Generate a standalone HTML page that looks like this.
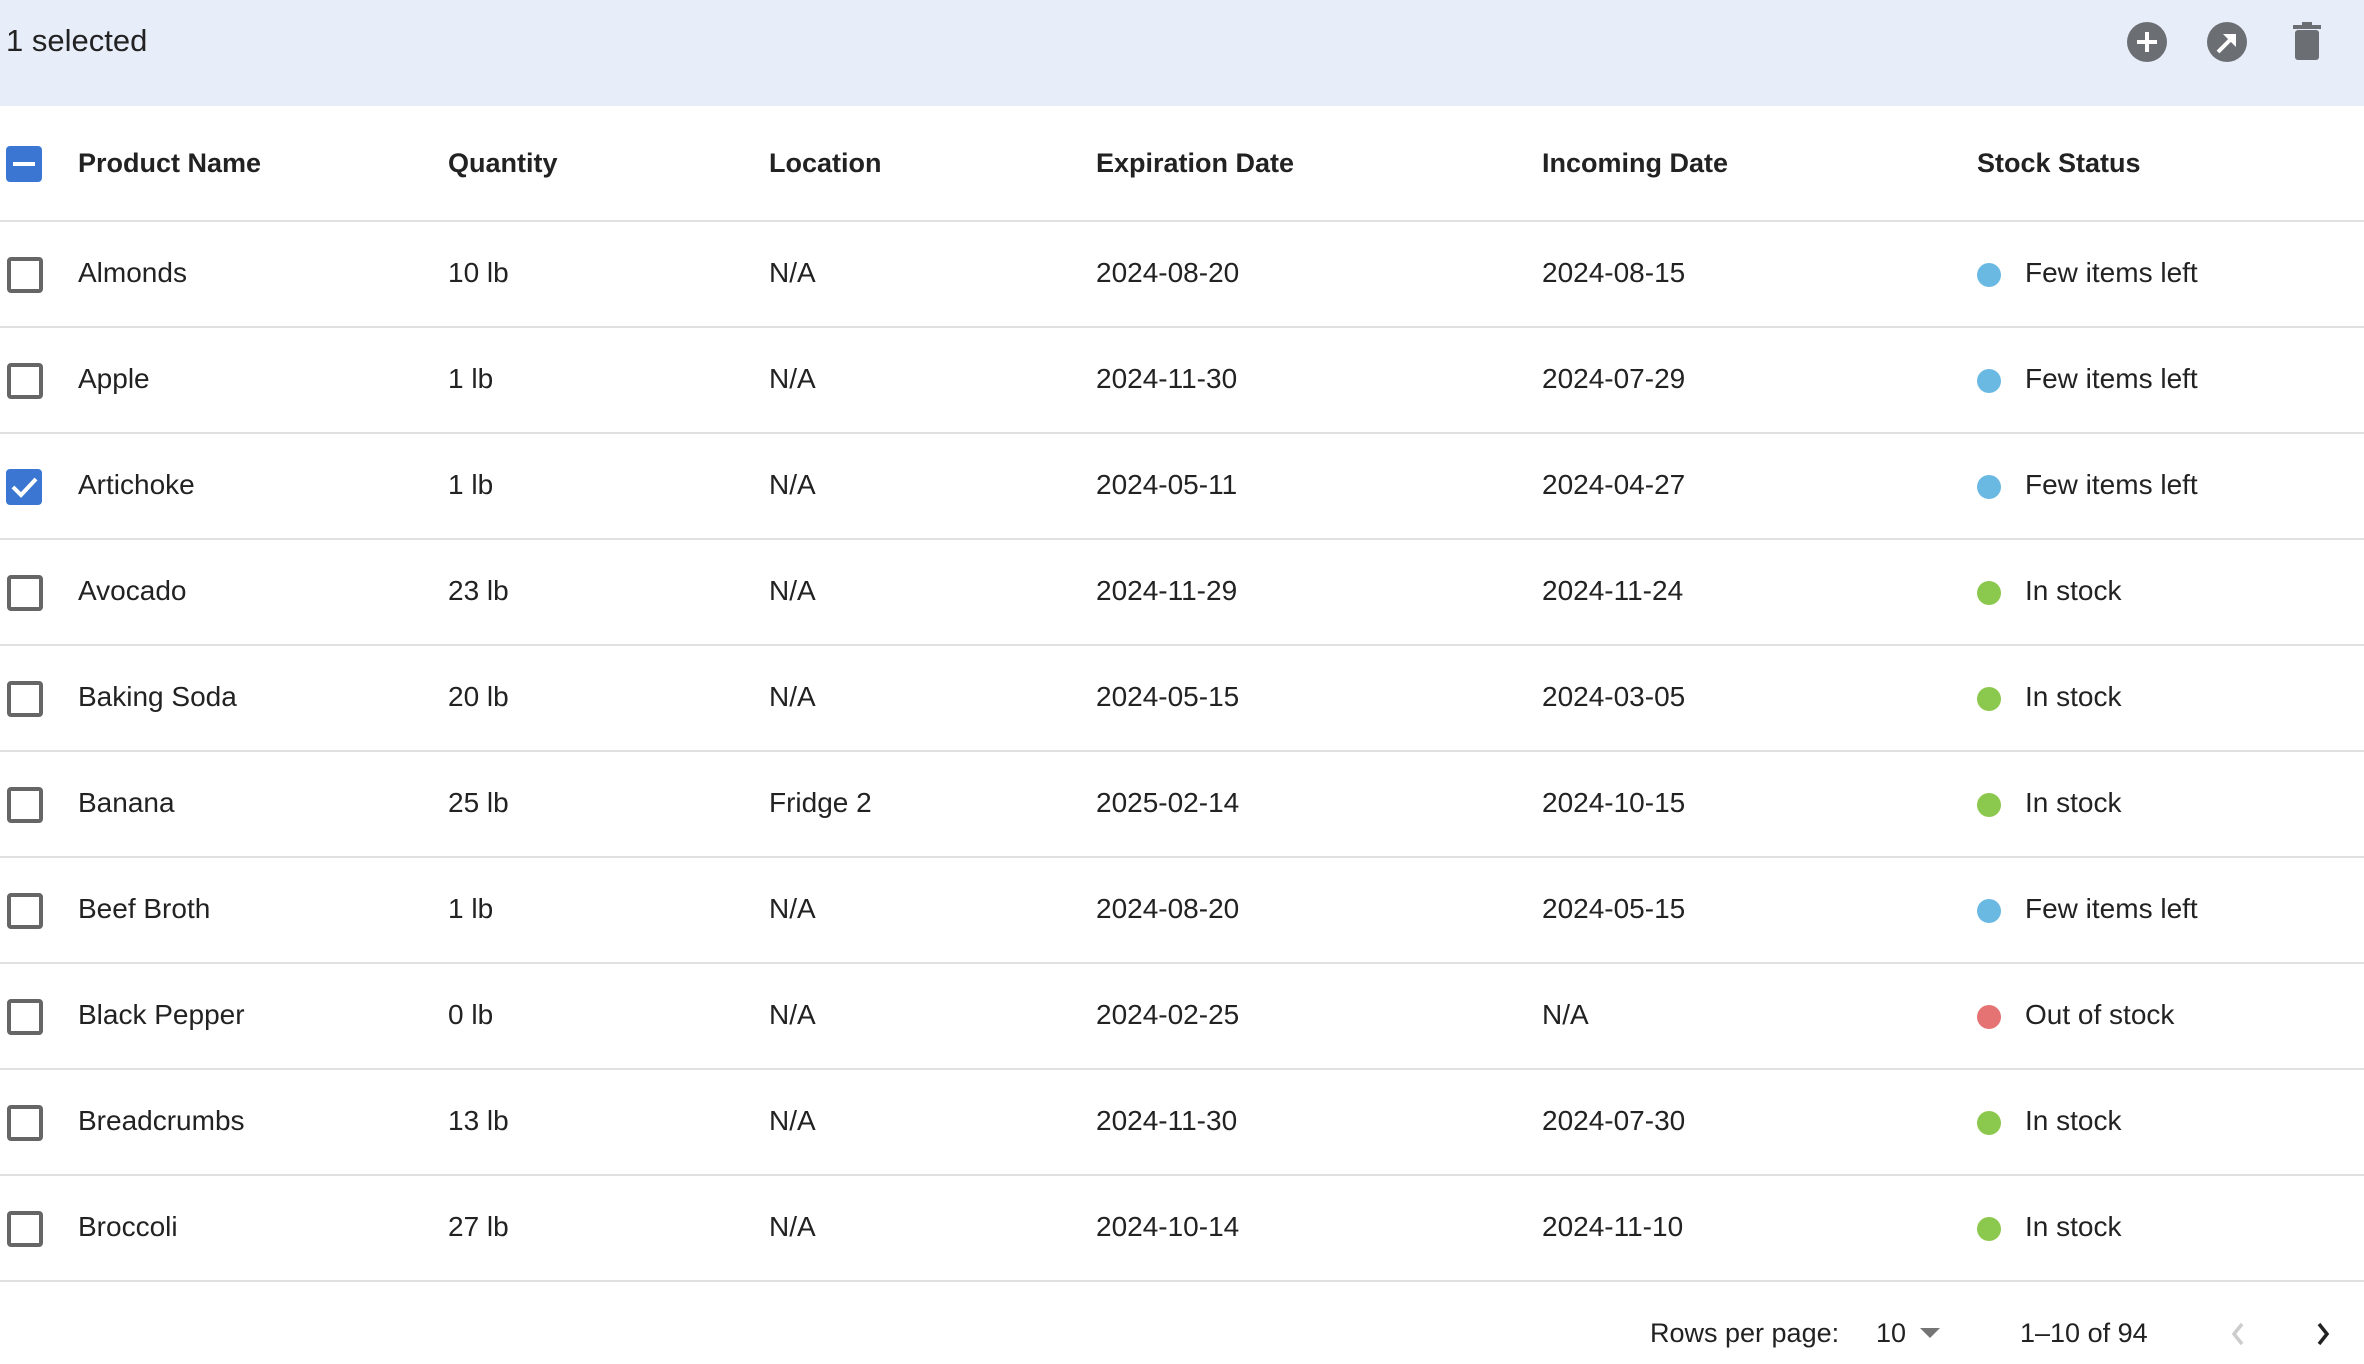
<!DOCTYPE html><html><head><meta charset="utf-8"><style>
body{margin:0;width:2364px;height:1364px;background:#fff;font-family:"Liberation Sans",sans-serif;color:#222;overflow:hidden;position:relative}
.bar{position:absolute;left:0;top:0;width:2364px;height:106px;background:#e7edf9}
.t{position:absolute;font-size:28px;line-height:34px;white-space:nowrap}
.h{font-weight:bold;font-size:27px}
.line{position:absolute;left:0;width:2364px;height:2px;background:#e0e0e0}
.cb{position:absolute;left:7px;width:30px;height:30px;border:4px solid #666;border-radius:4px;box-sizing:border-box;width:36px;height:36px}
.cbf{position:absolute;left:6px;width:36px;height:36px;background:#3b77d2;border-radius:4px}
.dot{position:absolute;left:1977px;width:24px;height:24px;border-radius:50%}
</style></head><body>
<div class="bar"></div>
<div class="t" style="left:6px;top:24px;font-size:31px">1 selected</div>
<svg style="position:absolute;left:2126px;top:22px" width="200" height="42" viewBox="0 0 200 42">
<circle cx="21" cy="20" r="20" fill="#6b6e73"/><rect x="11" y="18" width="20" height="4" fill="#fff"/><rect x="19" y="10" width="4" height="20" fill="#fff"/>
<circle cx="101" cy="20" r="20" fill="#6b6e73"/><path d="M92 30 L106 16" stroke="#fff" stroke-width="4"/><path d="M97 12 H110 V25 Z" fill="#fff"/>
</svg>
<svg style="position:absolute;left:2292px;top:22px" width="30" height="40" viewBox="0 0 30 40"><rect x="1" y="3" width="28" height="4" fill="#6b6e73"/><rect x="10" y="0" width="10" height="4" fill="#6b6e73"/><rect x="3" y="8" width="24" height="30" rx="3" fill="#6b6e73"/></svg>
<div class="cbf" style="top:146px"><div style="position:absolute;left:7px;top:16px;width:22px;height:4px;background:#fff"></div></div>
<div class="t h" style="left:78px;top:146px">Product Name</div>
<div class="t h" style="left:448px;top:146px">Quantity</div>
<div class="t h" style="left:769px;top:146px">Location</div>
<div class="t h" style="left:1096px;top:146px">Expiration Date</div>
<div class="t h" style="left:1542px;top:146px">Incoming Date</div>
<div class="t h" style="left:1977px;top:146px">Stock Status</div>
<div class="line" style="top:220px"></div>
<div id="rows"></div>
<script>
var d=[["Almonds","10 lb","N/A","2024-08-20","2024-08-15","b","Few items left"],
["Apple","1 lb","N/A","2024-11-30","2024-07-29","b","Few items left"],
["Artichoke","1 lb","N/A","2024-05-11","2024-04-27","b","Few items left"],
["Avocado","23 lb","N/A","2024-11-29","2024-11-24","g","In stock"],
["Baking Soda","20 lb","N/A","2024-05-15","2024-03-05","g","In stock"],
["Banana","25 lb","Fridge 2","2025-02-14","2024-10-15","g","In stock"],
["Beef Broth","1 lb","N/A","2024-08-20","2024-05-15","b","Few items left"],
["Black Pepper","0 lb","N/A","2024-02-25","N/A","r","Out of stock"],
["Breadcrumbs","13 lb","N/A","2024-11-30","2024-07-30","g","In stock"],
["Broccoli","27 lb","N/A","2024-10-14","2024-11-10","g","In stock"]];
var c={b:"#6ab9e2",g:"#8bc84e",r:"#e57373"},h="";
d.forEach(function(r,i){var y=222+i*106,ty=y+34;
h+=(i==2?'<div class="cbf" style="top:'+(y+35)+'px"><svg width="36" height="36"><path d="M7 18 L15 26 L30 10" stroke="#fff" stroke-width="4" fill="none"/></svg></div>':'<div class="cb" style="top:'+(y+35)+'px"></div>');
[78,448,769,1096,1542].forEach(function(x,j){h+='<div class="t" style="left:'+x+'px;top:'+ty+'px">'+r[j]+'</div>'});
h+='<div class="dot" style="top:'+(y+41)+'px;background:'+c[r[5]]+'"></div><div class="t" style="left:2025px;top:'+ty+'px">'+r[6]+'</div>';
h+='<div class="line" style="top:'+(y+104)+'px"></div>';});
document.getElementById("rows").innerHTML=h;
</script>
<div class="t" style="left:1650px;top:1316px;font-size:27px">Rows per page:</div>
<div class="t" style="left:1876px;top:1316px;font-size:27px">10</div>
<svg style="position:absolute;left:1920px;top:1328px" width="20" height="12"><path d="M0 0H20L10 10Z" fill="#757575"/></svg>
<div class="t" style="left:2020px;top:1316px;font-size:27px">1–10 of 94</div>
<svg style="position:absolute;left:2228px;top:1320px" width="130" height="28"><path d="M14 4 L6 14 L14 24" stroke="#ccc" stroke-width="3.5" fill="none"/><path d="M91 4 L99 14 L91 24" stroke="#222" stroke-width="3.5" fill="none"/></svg>
</body></html>
